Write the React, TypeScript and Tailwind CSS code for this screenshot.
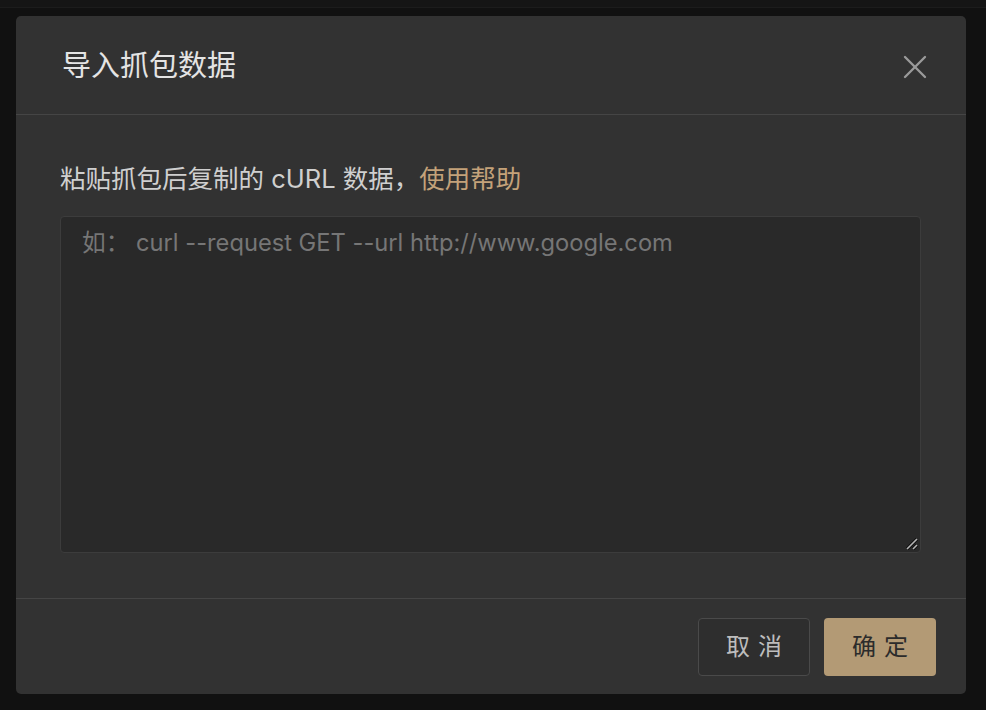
import { X } from "lucide-react";

const font = { fontFamily: '"Inter", "Noto Sans CJK SC", sans-serif' };

export default function App() {
  return (
    <div className="min-h-[710px] w-full bg-[#111111]" style={font}>
      <div className="h-[8px] border-b border-[#1c1c1c] bg-[#151515]" />
      <div className="px-4 pt-[8px] pb-4">
        <div className="flex h-[678px] w-[950px] flex-col rounded-[5px] bg-[#323232]">
          {/* header */}
          <div className="flex h-[99px] shrink-0 items-center justify-between border-b border-[#454545] pl-[46px] pr-[31px]">
            <div className="text-[29px] leading-none text-[#e4e4e4]">导入抓包数据</div>
            <button className="mt-[4px] text-[#9a9a9a]">
              <X className="h-[40px] w-[40px]" strokeWidth={1.4} />
            </button>
          </div>

          {/* body */}
          <div className="flex flex-1 flex-col border-b border-[#454545] pl-[44px] pr-[45px] pt-[46px] pb-[45px]">
            <div className="mb-[19px] text-[25.5px] leading-[36px] text-[#cfcfcf]">
              粘贴抓包后复制的 cURL 数据，<span className="text-[#c4a27a]">使用帮助</span>
            </div>
            <div className="relative">
              <textarea
                className="block h-[337px] w-full resize-none rounded-[4px] border border-[#3c3c3c] bg-[#292929] px-[21px] py-[10px] text-[23.7px] leading-[32px] text-[#ddd] placeholder:text-[#767676] outline-none"
                placeholder="如： curl --request GET --url http://www.google.com"
              />
              <svg
                className="pointer-events-none absolute bottom-[3px] right-[3px]"
                width="12"
                height="12"
                viewBox="0 0 12 12"
              >
                <path d="M1 11 L11 1" stroke="#111" strokeWidth="3.5" />
                <path d="M1 11 L11 1" stroke="#b5b5b5" strokeWidth="1.6" />
                <path d="M7 11 L11 7" stroke="#111" strokeWidth="3.5" />
                <path d="M7 11 L11 7" stroke="#b5b5b5" strokeWidth="1.6" />
              </svg>
            </div>
          </div>

          {/* footer */}
          <div className="flex h-[95px] shrink-0 items-center justify-end gap-[14px] pr-[30px]">
            <button className="h-[58px] w-[112px] rounded-[4px] border border-[#4a4a4a] bg-[#2e2e2e] pl-[8px] text-[24px] tracking-[8px] text-[#bdbdbd]">
              取消
            </button>
            <button className="h-[58px] w-[112px] rounded-[4px] bg-[#b39a75] pl-[8px] text-[24px] tracking-[8px] text-[#2b2b2b]">
              确定
            </button>
          </div>
        </div>
      </div>
    </div>
  );
}
